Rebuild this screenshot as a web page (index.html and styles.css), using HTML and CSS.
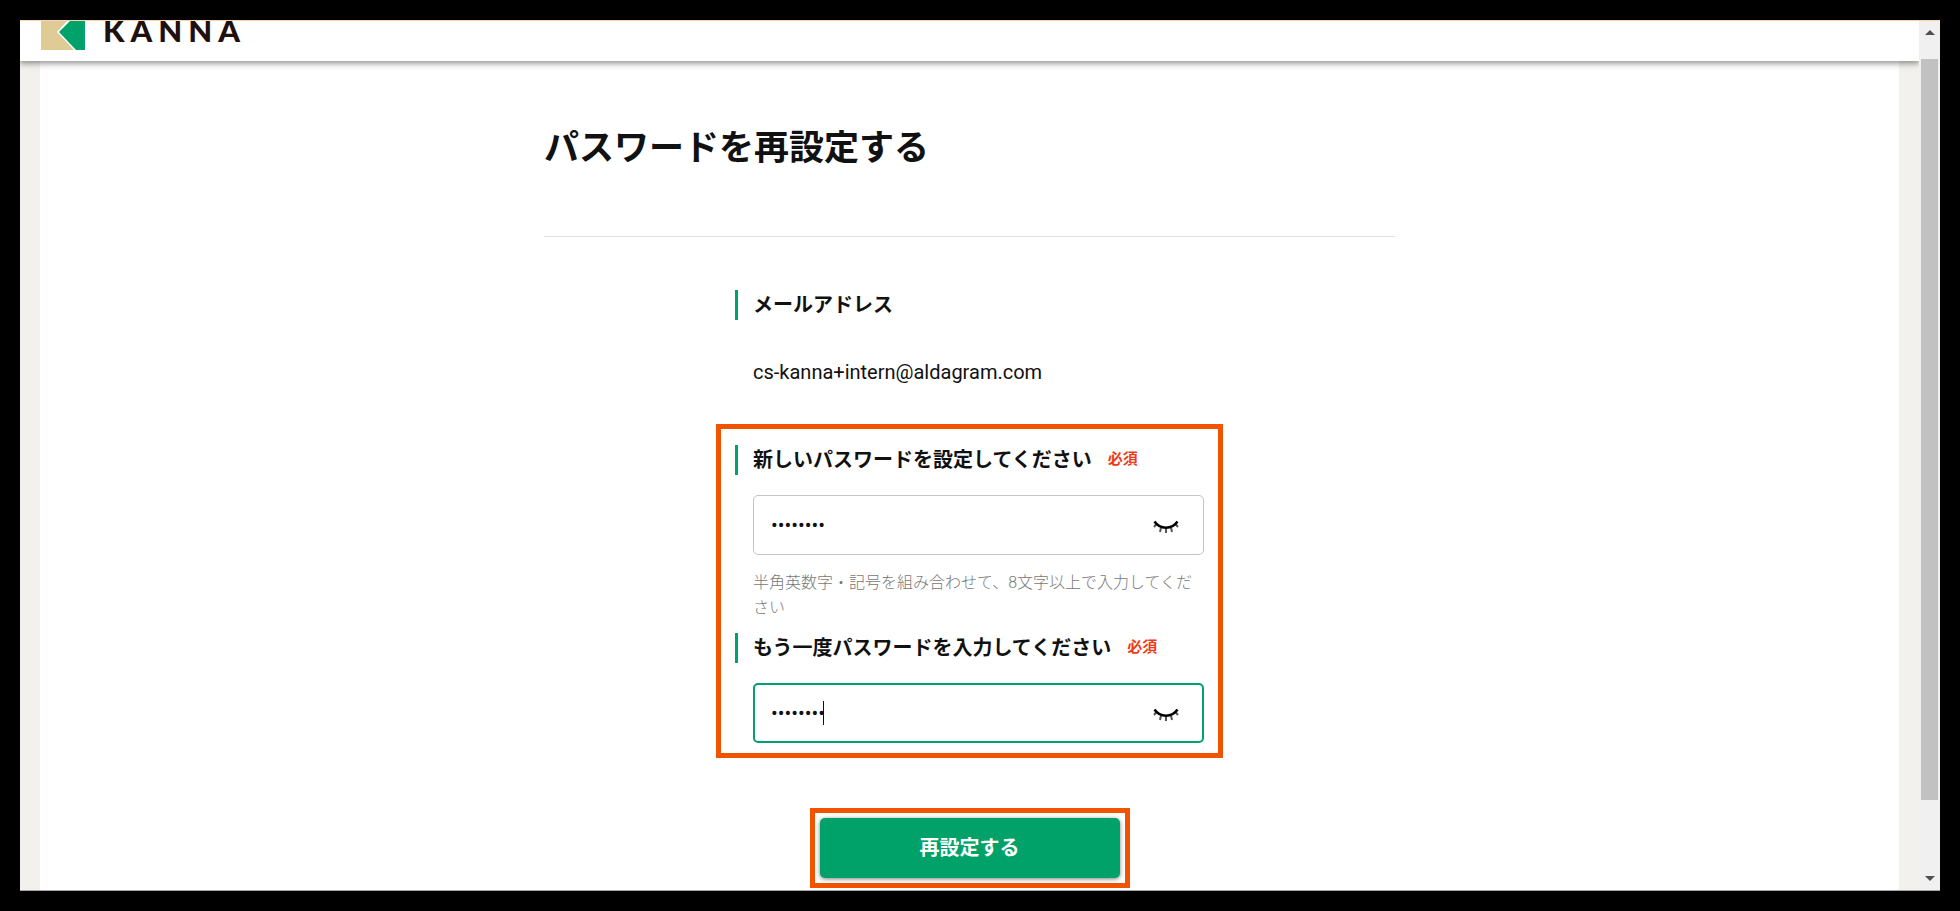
FILE: index.html
```html
<!DOCTYPE html>
<html lang="ja">
<head>
  <meta charset="UTF-8">
  <meta name="viewport" content="width=device-width, initial-scale=1.0">
  <title>KANNA | パスワードを再設定する</title>
  <link rel="stylesheet" href="styles.css">
</head>
<body>
  <div class="window">
    <div class="viewport">
      <header class="header">
        <a class="brand" href="#">
          <svg class="brand-mark" viewBox="0 0 44 29" aria-hidden="true">
            <path fill="#dfcb96" d="M0 0h26L16 11 33 29H0z"/>
            <path fill="#00a269" d="M29 0h15v29h-9L18 11z"/>
          </svg>
          <span class="brand-name">KANNA</span>
        </a>
      </header>
      <main class="page">
        <div class="container">
          <h1>パスワードを再設定する</h1>
          <form class="form">
            <section class="email">
              <h2 class="label">メールアドレス</h2>
              <p class="email-value">cs-kanna+intern@aldagram.com</p>
            </section>

            <div class="highlight passwords">
              <div class="label">
                <label for="password">新しいパスワードを設定してください</label>
                <span class="required">必須</span>
              </div>
              <div class="field">
                <input type="password" id="password" value="password">
                <button type="button" class="toggle" aria-label="パスワードを表示">
                  <svg viewBox="0 0 26 14" fill="none">
                    <path stroke="#555" stroke-width="2" d="M3.500 4L1 7M8 7.500L7 12M13 8.500V13M18 7.500L19 12M22.500 4L25 7"/>
                    <path stroke="#000" stroke-width="2.500" d="M1.500 1.500C7 9.700 19 9.700 24.500 1.500"/>
                  </svg>
                </button>
              </div>
              <p class="help">半角英数字・記号を組み合わせて、8文字以上で入力してください</p>

              <div class="label">
                <label for="confirm">もう一度パスワードを入力してください</label>
                <span class="required">必須</span>
              </div>
              <div class="field active">
                <input type="password" id="confirm" value="password">
                <span class="caret"></span>
                <button type="button" class="toggle" aria-label="パスワードを表示">
                  <svg viewBox="0 0 26 14" fill="none">
                    <path stroke="#555" stroke-width="2" d="M3.500 4L1 7M8 7.500L7 12M13 8.500V13M18 7.500L19 12M22.500 4L25 7"/>
                    <path stroke="#000" stroke-width="2.500" d="M1.500 1.500C7 9.700 19 9.700 24.500 1.500"/>
                  </svg>
                </button>
              </div>
            </div>

            <div class="highlight submit">
              <button type="submit" class="submit-button">再設定する</button>
            </div>
          </form>
        </div>
      </main>
    </div>
    <div class="scrollbar" aria-hidden="true">
      <span class="arrow-up"></span>
      <div class="track"><div class="thumb"></div></div>
      <span class="arrow-down"></span>
    </div>
  </div>
</body>
</html>
```
FILE: styles.css
```css
* {
  box-sizing: border-box;
}

body {
  margin: 0;
  padding: 20px;
  height: 100vh;
  background: #000;
  color: #111;
  font-family: Roboto, "Noto Sans CJK JP", sans-serif;
  font-size: 20px;
  line-height: 30px;
}

h1, h2, p {
  margin: 0;
}

.window {
  display: flex;
  height: 100%;
  overflow: hidden;
  background: #f2f1ed;
  border-top: 1px solid #fdd5b1;
  border-bottom: 1px solid #aaa3a3;
}

.viewport {
  flex: 1;
  display: flex;
  flex-direction: column;
  min-width: 0;
  overflow: hidden;
}

/* Header */
.header {
  flex: none;
  height: 40px;
  background: #fff;
  box-shadow: 0 2px 4px rgba(0, 0, 0, 0.2), 0 4px 5px rgba(0, 0, 0, 0.14), 0 1px 10px rgba(0, 0, 0, 0.12);
  z-index: 1;
}

.brand {
  display: flex;
  align-items: flex-start;
  gap: 18px;
  padding-left: 21px;
  color: #1f0f0d;
  text-decoration: none;
}

.brand-mark {
  width: 44px;
  height: 29px;
}

.brand-name {
  font-family: Lato, sans-serif;
  font-size: 31px;
  font-weight: 900;
  line-height: 18px;
  letter-spacing: 6px;
}

/* Page */
.page {
  flex: 1;
  min-height: 0;
  margin: 0 20px;
  padding-top: 63px;
  overflow: hidden;
  background: #fff;
}

.container {
  max-width: 851px;
  margin: 0 auto;
}

h1 {
  padding-bottom: 62px;
  border-bottom: 1px solid #e0e0e0;
  font-size: 35px;
  font-weight: 700;
  line-height: 50px;
}

.form {
  max-width: 507px;
  margin: 53px auto 0;
}

.label {
  display: flex;
  gap: 16px;
  padding-left: 15px;
  border-left: 3px solid #00a269;
  font-size: 20px;
  font-weight: 700;
}

.required {
  color: #f03a17;
  font-size: 15px;
  line-height: 28px;
}

.email {
  padding-left: 19px;
}

.email-value {
  margin-top: 37px;
  padding-left: 18px;
}

.highlight {
  border: 5px solid #f05400;
}

.passwords {
  margin-top: 37px;
  padding: 16px 14px 10px;
}

.field {
  position: relative;
  display: flex;
  align-items: center;
  height: 60px;
  margin: 20px 0 0 18px;
  padding: 0 24px 0 17px;
  border: 1px solid #c4c4c4;
  border-radius: 5px;
}

.field.active {
  padding: 0 23px 0 16px;
  border: 2px solid #00a269;
}

.field input {
  flex: 1;
  min-width: 0;
  padding: 0;
  border: 0;
  outline: 0;
  background: none;
  color: #111;
  font: inherit;
}

.caret {
  position: absolute;
  left: 68px;
  width: 1px;
  height: 24px;
  background: #111;
}

.toggle {
  display: flex;
  padding: 3px 0 0;
  border: 0;
  background: none;
  cursor: pointer;
}

.toggle svg {
  width: 26px;
  height: 14px;
}

.help {
  margin: 15px 0 13px 18px;
  color: #777;
  font-size: 16px;
  font-weight: 300;
  line-height: 25px;
}

.submit {
  width: 320px;
  margin: 50px auto 0;
  padding: 5px;
}

.submit-button {
  display: block;
  width: 100%;
  height: 60px;
  border: 0;
  border-radius: 5px;
  background: #00a269;
  box-shadow: 0 1px 4px rgba(0, 0, 0, 0.5);
  color: #fff;
  font: inherit;
  font-weight: 700;
  cursor: pointer;
}

/* Scrollbar */
.scrollbar {
  display: flex;
  flex-direction: column;
  align-items: center;
  width: 21px;
  background: #f0f0f0;
}

.arrow-up,
.arrow-down {
  width: 0;
  border: 5px solid transparent;
}

.arrow-up {
  margin: 4px 0 24px;
  border-bottom-color: #505050;
}

.arrow-down {
  margin: 20px 0 4px;
  border-top-color: #505050;
}

.track {
  flex: 1;
  width: 17px;
}

.thumb {
  height: 93%;
  background: #c1c1c1;
}
```
